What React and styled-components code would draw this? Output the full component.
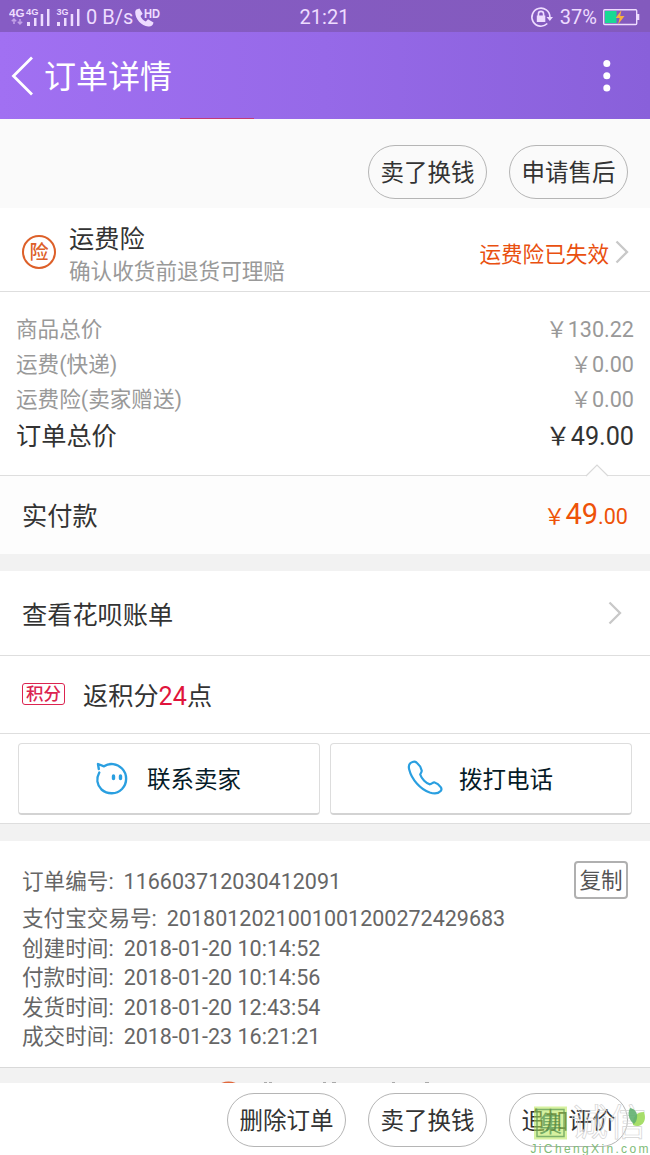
import styled, { createGlobalStyle } from 'styled-components';

const GlobalStyle = createGlobalStyle`
 * {
  box-sizing: border-box;
 }

 body {
  margin: 0;
  background-color: #ffffff;
  font-family: Roboto, 'Noto Sans CJK SC', sans-serif;
  color: #333333;
 }
`;

const Screen = styled.main`
 display: flex;
 flex-direction: column;
 width: 650px;
 height: 1155px;
 overflow: hidden;
`;

const StatusBar = styled.header`
 display: grid;
 grid-template-columns: 1fr auto 1fr;
 align-items: center;
 flex: none;
 height: 32px;
 padding: 1px 10px 0 9px;
 background: linear-gradient(90deg, #865cc4, #835abd);
 color: #eedcff;
 font-size: 20px;
 line-height: 32px;
`;

const StatusGroup = styled.div`
 display: flex;
 align-items: center;
 height: 32px;
 justify-content: ${({ $end }) => ($end ? 'flex-end' : 'flex-start')};
`;

const Speed = styled.span`
 margin-left: 6px;
 font-size: 20px;
`;

const Battery = styled.span`
 margin: 0 6px 0 7px;
`;

const NavBar = styled.nav`
 display: flex;
 align-items: center;
 flex: none;
 height: 87px;
 padding: 1px 37px 0 11px;
 background: linear-gradient(90deg, #a170f2, #9669e8 50%, #8960da);
 color: #ffffff;
`;

const NavTitle = styled.h1`
 flex: 1;
 margin: 2px 0 0 10px;
 font-size: 32px;
 font-weight: 400;
 line-height: 40px;
`;

const TabLine = styled.div`
 flex: none;
 width: 74px;
 height: 2px;
 margin: -1px 0 -1px 180px;
 background-color: #c23a78;
`;

const Actions = styled.section`
 display: flex;
 justify-content: flex-end;
 align-items: center;
 flex: none;
 gap: 22px;
 height: ${({ $height }) => $height}px;
 padding: ${({ $top }) => $top}px 22px 0 0;
 background-color: ${({ $background }) => $background};
`;

const Pill = styled.button`
 width: 119px;
 height: 54px;
 padding: 1px 0 0;
 border: 1px solid #b5b5b5;
 border-radius: 27px;
 background: transparent;
 color: #333333;
 font-family: inherit;
 font-size: 23.5px;
 line-height: 52px;
 white-space: nowrap;
`;

const Row = styled.section`
 display: flex;
 align-items: center;
 flex: none;
 height: ${({ $height }) => $height}px;
 padding: ${({ $top = 0 }) => $top}px ${({ $right = 22 }) => $right}px ${({ $bottom = 0 }) => $bottom}px 22px;
 border-bottom: ${({ $line }) => ($line ? '1px solid #dedede' : 'none')};
 background-color: ${({ $background }) => $background || '#ffffff'};
`;

const InsuranceText = styled.div`
 flex: 1;
 margin-left: 13px;
 padding-top: 7px;
`;

const InsuranceTitle = styled.div`
 font-size: 25.2px;
 line-height: 32px;
`;

const InsuranceNote = styled.div`
 color: #999999;
 font-size: 21.6px;
 line-height: 31px;
`;

const InsuranceBadge = styled.div`
 width: 34px;
 height: 34px;
 border: 2px solid #dd6029;
 border-radius: 50%;
 color: #dd6029;
 font-size: 19px;
 font-weight: 500;
 line-height: 32px;
 text-align: center;
`;

const Expired = styled.span`
 margin-right: 6px;
 color: #e9500f;
 font-size: 21.6px;
`;

const Prices = styled.section`
 position: relative;
 flex: none;
 height: 184px;
 padding: 20px 16px 0;
 border-bottom: 1px solid #dedede;
`;

const PriceRow = styled.div`
 display: flex;
 justify-content: space-between;
 color: #999999;
 font-size: 21.6px;
 line-height: 35px;
`;

const TotalRow = styled(PriceRow)`
 color: #333333;
 font-size: 25.2px;
 line-height: 40px;
`;

const Notch = styled.svg`
 position: absolute;
 right: 41px;
 bottom: -2px;
`;

const Label = styled.span`
 flex: 1;
 font-size: 25.2px;
`;

const Paid = styled.span`
 color: #ee5208;
 font-size: 21.6px;
`;

const PaidBig = styled.span`
 font-size: 29px;
`;

const Gap = styled.div`
 flex: none;
 height: ${({ $height }) => $height}px;
 background-color: #f2f2f2;
`;

const PointsBadge = styled.span`
 width: 43px;
 height: 22px;
 margin: 1px 18px 1px 0;
 border: 1px solid #dc2450;
 border-radius: 3px;
 color: #dc2450;
 font-size: 17.5px;
 font-weight: 500;
 line-height: 21px;
 text-align: center;
`;

const Points = styled.span`
 color: #e0143c;
`;

const Contacts = styled.section`
 display: flex;
 flex: none;
 gap: 10px;
 height: 90px;
 padding: 9px 18px 0;
 border-bottom: 1px solid #dedede;
`;

const ContactButton = styled.button`
 display: flex;
 align-items: center;
 flex: 1;
 height: 72px;
 padding: 0 0 1px 76px;
 border: 1px solid #dddddd;
 border-bottom: 2px solid #d3d3d3;
 border-radius: 4px;
 background-color: #ffffff;
 color: #051b28;
 font-family: inherit;
 font-size: 23.5px;
`;

const ContactLabel = styled.span`
 margin-left: ${({ $left }) => $left}px;
`;

const Info = styled.section`
 flex: none;
 height: 227px;
 padding: 20px 22px 0;
 border-bottom: 1px solid #d9d9d9;
 color: #666666;
 font-size: 21.6px;
`;

const InfoHead = styled.div`
 display: flex;
 justify-content: space-between;
 height: 42px;
 line-height: 42px;
`;

const InfoRow = styled.div`
 height: 29.6px;
 line-height: 31px;
`;

const InfoValue = styled.span`
 margin-left: 10px;
 font-size: 21.5px;
`;

const CopyButton = styled.button`
 width: 54px;
 height: 38px;
 padding: 1px 0 0;
 border: 2px solid #b0b0b0;
 border-radius: 4px;
 background: transparent;
 color: #555555;
 font-family: inherit;
 font-size: 21.6px;
 line-height: 34px;
 white-space: nowrap;
`;

const NextSection = styled.div`
 flex: none;
 height: 15px;
 background-color: #f2f2f2;
`;

const Watermark = styled.div`
 position: absolute;
 left: 530px;
 top: 1104px;
 width: 120px;
 height: 51px;
`;

const StatusSignal = () => (
 <svg width='71' height='32' viewBox='9 0 71 32' fill='#eedcff'>
  <g fontFamily='Liberation Sans, sans-serif' fontWeight='700'>
   <text x='9' y='16' fontSize='11' textLength='15.5' lengthAdjust='spacingAndGlyphs'>4G</text>
   <text x='26' y='14' fontSize='9' textLength='12.5' lengthAdjust='spacingAndGlyphs'>4G</text>
   <text x='56.5' y='14' fontSize='9' textLength='12' lengthAdjust='spacingAndGlyphs'>3G</text>
  </g>
  <path d='M14 18v5M11.8 20.3L14 18l2.2 2.3M20 23v-5M17.8 20.7L20 23l2.2-2.3' fill='none' stroke='#c3a2e8' strokeWidth='1.5' />
  <path d='M27 21h3v4h-3zM34 17h2.5v8H34zM40.7 13h2.5v12h-2.5zM47 8h2.5v17H47z' />
  <path d='M57 21h3v4h-3zM64 17h2.5v8H64zM70.7 13h2.5v12h-2.5zM77 8h2.5v17H77z' />
 </svg>
);

const CallIcon = () => (
 <svg width='28' height='32' viewBox='135 0 28 32' fill='#eedcff'>
  <path d='M138.500 8.500l3-1 3.200 5.200-2.200 2.300c1 2.500 2.600 4.300 5.300 5.500l2.200-2.300 5.500 3.300c-.4 2.900-2.500 4.300-5.200 4-7-.7-13.100-7.300-13.100-14.200 0-1.200.4-2.200 1.300-2.800z' />
  <text x='146' y='17' fontSize='12' fontWeight='700' fontFamily='Liberation Sans, sans-serif' textLength='16' lengthAdjust='spacingAndGlyphs'>HD</text>
 </svg>
);

const LockIcon = () => (
 <svg width='23' height='32' viewBox='531 0 23 32' fill='none' stroke='#eedcff' strokeWidth='1.6'>
  <path d='M548.300 22.500a9 9 0 1 1 2.600-6.500' />
  <rect x='537.800' y='14.500' width='8.500' height='6.500' fill='#eedcff' stroke='none' />
  <path d='M539.400 15v-2a2.600 2.600 0 0 1 5.200 0v2' />
  <path d='M547.500 16h6.500l-3.200 4z' fill='#eedcff' stroke='none' />
 </svg>
);

const BatteryIcon = () => (
 <svg width='37' height='32' viewBox='604 0 37 32'>
  <rect x='604.700' y='8.700' width='33' height='14.800' rx='1' fill='none' stroke='#eedcff' strokeWidth='1.4' />
  <path d='M638 13h2.300v6H638z' fill='#eedcff' />
  <path d='M606 10h11.500v12H606z' fill='#18d994' />
  <path d='M622.500 9l-5.800 8h4l-1.700 6.500 6.500-8.500h-4.300z' fill='#f8b13c' />
 </svg>
);

const BackIcon = () => (
 <svg width='23' height='40' viewBox='0 0 23 40' fill='none' stroke='#ffffff' strokeWidth='2.800'>
  <path d='M21 1.500L2.500 20 21 38.500' />
 </svg>
);

const MoreIcon = () => (
 <svg width='13' height='36' viewBox='0 0 13 36' fill='#ffffff'>
  <circle cx='6.800' cy='5.500' r='3.500' />
  <circle cx='6.800' cy='17.800' r='3.500' />
  <circle cx='6.800' cy='30' r='3.500' />
 </svg>
);

const Chevron = () => (
 <svg width='14' height='24' viewBox='0 0 14 24' fill='none' stroke='#c8c8c8' strokeWidth='2.300'>
  <path d='M1.500 1.500L12 12 1.500 22.500' />
 </svg>
);

const ChatIcon = () => (
 <svg width='34' height='36' viewBox='0 0 34 36' fill='none' stroke='#2a9fe0' strokeWidth='2.400' strokeLinejoin='round' strokeLinecap='round'>
  <path d='M4.300 12.500C1 18.500 2 25 6.500 29.500c6 5.300 15 5 20.500-.5 5.500-5.800 5.500-14.800 0-20.500C22 3.500 14.500 2.500 9 6.300L3 4l.8 5' />
  <path d='M18.500 16v2.500M25.500 16v2.500' strokeWidth='3.400' />
 </svg>
);

const PhoneIcon = () => (
 <svg width='36' height='36' viewBox='0 0 36 36' fill='none' stroke='#2a9fe0' strokeWidth='2.200' strokeLinejoin='round'>
  <path d='M5.500 2C2.500 3 1.300 6 2.200 9.500c2.500 10 11 19.500 20.500 23 4.500 1.500 8.500 1.300 11-1.500.9-1 .9-2.500 0-3.800-1.500-2.200-4-4.200-6-4.700-1.600-.4-3 1.300-4.800 1.800-3.700-.7-8.300-5.500-9.700-9.800.5-1.500 1.800-2.500 1.500-4C14 7.500 12 4.500 9.500 2.500 8.300 1.600 7 1.500 5.500 2z' />
 </svg>
);

const times = [
 ['支付宝交易号', '2018012021001001200272429683'],
 ['创建时间', '2018-01-20 10:14:52'],
 ['付款时间', '2018-01-20 10:14:56'],
 ['发货时间', '2018-01-20 12:43:54'],
 ['成交时间', '2018-01-23 16:21:21'],
];

const prices = [
 ['商品总价', '￥130.22'],
 ['运费(快递)', '￥0.00'],
 ['运费险(卖家赠送)', '￥0.00'],
];

const App = () => {
 return (
  <Screen>
   <GlobalStyle />
   <StatusBar>
    <StatusGroup>
     <StatusSignal />
     <Speed>0 B/s</Speed>
     <CallIcon />
    </StatusGroup>
    <span>21:21</span>
    <StatusGroup $end>
     <LockIcon />
     <Battery>37%</Battery>
     <BatteryIcon />
    </StatusGroup>
   </StatusBar>
   <NavBar>
    <BackIcon />
    <NavTitle>订单详情</NavTitle>
    <MoreIcon />
   </NavBar>
   <TabLine />
   <Actions $height={89} $top={17} $background='#fafafa'>
    <Pill>卖了换钱</Pill>
    <Pill>申请售后</Pill>
   </Actions>
   <Row $height={84} $top={5} $right={21} $line>
    <InsuranceBadge>险</InsuranceBadge>
    <InsuranceText>
     <InsuranceTitle>运费险</InsuranceTitle>
     <InsuranceNote>确认收货前退货可理赔</InsuranceNote>
    </InsuranceText>
    <Expired>运费险已失效</Expired>
    <Chevron />
   </Row>
   <Prices>
    {prices.map(([name, value]) => (
     <PriceRow key={name}>
      <span>{name}</span>
      <span>{value}</span>
     </PriceRow>
    ))}
    <TotalRow>
     <span>订单总价</span>
     <span>￥49.00</span>
    </TotalRow>
    <Notch width='24' height='13' viewBox='0 0 24 13'>
     <path d='M1 12L12 1l11 11' fill='#fdfdfd' stroke='#d9d9d9' strokeWidth='1.2' />
    </Notch>
   </Prices>
   <Row $height={78} $bottom={3} $background='#fdfdfd'>
    <Label>实付款</Label>
    <Paid>
     ￥<PaidBig>49</PaidBig>.00
    </Paid>
   </Row>
   <Gap $height={17} />
   <Row $height={85} $right={28} $line>
    <Label>查看花呗账单</Label>
    <Chevron />
   </Row>
   <Row $height={78} $bottom={1} $line>
    <PointsBadge>积分</PointsBadge>
    <Label>
     返积分<Points>24</Points>点
    </Label>
   </Row>
   <Contacts>
    <ContactButton>
     <ChatIcon />
     <ContactLabel $left={18}>联系卖家</ContactLabel>
    </ContactButton>
    <ContactButton>
     <PhoneIcon />
     <ContactLabel $left={16}>拨打电话</ContactLabel>
    </ContactButton>
   </Contacts>
   <Gap $height={17} />
   <Info>
    <InfoHead>
     <span>
      订单编号:<InfoValue>116603712030412091</InfoValue>
     </span>
     <CopyButton>复制</CopyButton>
    </InfoHead>
    {times.map(([name, value]) => (
     <InfoRow key={name}>
      {name}:<InfoValue>{value}</InfoValue>
     </InfoRow>
    ))}
   </Info>
   <NextSection>
    <svg width='650' height='15' viewBox='0 0 650 15'>
     <circle cx='228.500' cy='30.500' r='17' fill='#e0683c' />
     <path d='M264 14.500h3M269 14.500h3M323 14.500h3M332 14.500h4M392 14.500h3M425 14.500h4' stroke='#aaaaaa' strokeWidth='1' />
    </svg>
   </NextSection>
   <Actions $height={72} $top={1} $background='#ffffff'>
    <Pill>删除订单</Pill>
    <Pill>卖了换钱</Pill>
    <Pill>追加评价</Pill>
   </Actions>
   {/* site mark over the last button */}
   <Watermark>
    <svg width='120' height='51' viewBox='0 0 120 51'>
     <rect x='4' y='2.500' width='33' height='33' fill='#b4e650' opacity='0.55' />
     <rect x='7' y='5.500' width='27' height='27' fill='none' stroke='#5f9b58' strokeWidth='1.5' opacity='0.75' />
     <text x='9' y='28' fontSize='23' fill='#4f8f50' opacity='0.7' fontFamily='Noto Sans CJK SC, sans-serif'>集</text>
     <text x='41' y='32' fontSize='37' fill='#ffffff' fillOpacity='0.15' stroke='#d4d4d4' strokeWidth='0.7' fontFamily='Noto Sans CJK SC, sans-serif' textLength='75'>诚信</text>
     <path d='M103 21C102 14 106 8 114 8c2 6 1 11-4 13.500-3 1-5 .5-7-.5z' fill='#a2dc62' opacity='0.95' />
     <path d='M104 20C99 16 97 10 100 4c5 1 8 5 7 10-.3 2.500-1.500 4.500-3 6z' fill='#62b070' opacity='0.9' />
     <text x='0.500' y='49' fontSize='12' fill='#80bc78' fontFamily='Liberation Sans, sans-serif' textLength='118' lengthAdjust='spacing'>JiChengXin.com</text>
    </svg>
   </Watermark>
  </Screen>
 );
};

export default App;
